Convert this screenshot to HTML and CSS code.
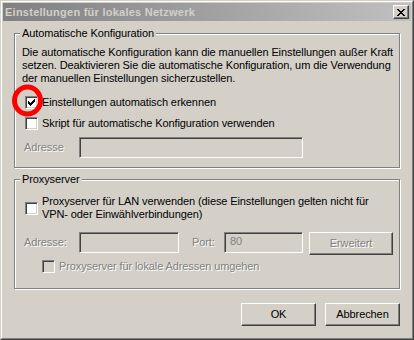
FILE: index.html
```html
<!DOCTYPE html>
<html lang="de">
<head>
    <meta charset="UTF-8">
    <meta name="viewport" content="width=device-width, initial-scale=1.0">
    <title>Einstellungen für lokales Netzwerk</title>
    <link rel="stylesheet" href="styles.css">
</head>
<body>
    <div class="window">
        <div class="frame">
            <div class="titlebar">
                <span class="title">Einstellungen für lokales Netzwerk</span>
                <span class="close-btn">
                    <svg width="8" height="7" viewBox="0 0 8 7" shape-rendering="crispEdges">
                        <path d="M0 0h2v1H0zM6 0h2v1H6zM1 1h2v1H1zM5 1h2v1H5zM2 2h4v1H2zM3 3h2v1H3zM2 4h4v1H2zM1 5h2v1H1zM5 5h2v1H5zM0 6h2v1H0zM6 6h2v1H6z" fill="#000"/>
                    </svg>
                </span>
            </div>

            <div class="dialog-body">
                <fieldset class="group group-auto">
                    <legend>Automatische Konfiguration</legend>
                    <p class="desc">Die automatische Konfiguration kann die manuellen Einstellungen außer Kraft<br>setzen. Deaktivieren Sie die automatische Konfiguration, um die Verwendung<br>der manuellen Einstellungen sicherzustellen.</p>
                    <label class="check row-detect">
                        <span class="box">
                            <svg width="7" height="7" viewBox="0 0 7 7" shape-rendering="crispEdges">
                                <path d="M6 0h1v1H6zM5 1h2v1H5zM0 2h1v1H0zM4 2h3v1H4zM0 3h2v1H0zM3 3h3v1H3zM0 4h5v1H0zM1 5h3v1H1zM2 6h1v1H2z" fill="#000"/>
                            </svg>
                        </span>
                        <span>Einstellungen automatisch erkennen</span>
                    </label>
                    <label class="check row-script">
                        <span class="box"></span>
                        <span>Skript für automatische Konfiguration verwenden</span>
                    </label>
                    <div class="field-row row-script-addr">
                        <span class="field-label disabled">Adresse</span>
                        <span class="edit edit-script"></span>
                    </div>
                </fieldset>

                <fieldset class="group group-proxy">
                    <legend>Proxyserver</legend>
                    <label class="check check-multi">
                        <span class="box"></span>
                        <span>Proxyserver für LAN verwenden (diese Einstellungen gelten nicht für<br>VPN- oder Einwählverbindungen)</span>
                    </label>
                    <div class="field-row row-proxy-addr">
                        <span class="field-label disabled">Adresse:</span>
                        <span class="edit edit-addr"></span>
                        <span class="port-label disabled">Port:</span>
                        <span class="edit edit-port">80</span>
                        <button class="btn btn-advanced disabled" type="button">Erweitert</button>
                    </div>
                    <label class="check check-bypass">
                        <span class="box box-disabled"></span>
                        <span class="disabled">Proxyserver für lokale Adressen umgehen</span>
                    </label>
                </fieldset>

                <div class="actions">
                    <button class="btn" type="button">OK</button>
                    <button class="btn" type="button">Abbrechen</button>
                </div>
            </div>
        </div>

        <!-- Markierung um das erste Kontrollkästchen -->
        <svg class="highlight" width="34" height="36" viewBox="0 0 34 36">
            <ellipse cx="16.5" cy="17.5" rx="13" ry="13.5" fill="none" stroke="#ff0000" stroke-width="5"/>
        </svg>
    </div>
</body>
</html>
```

FILE: styles.css
```css
body {
    margin: 0;
    background: #d4d0c8;
    font-family: "Liberation Sans", Arial, sans-serif;
    font-size: 11px;
    line-height: 13px;
    letter-spacing: -0.1px;
    color: #000;
}
.window {
    position: relative;
    width: 414px;
    height: 340px;
    box-sizing: border-box;
    border: 1px solid;
    border-color: #d4d0c8 #404040 #404040 #d4d0c8;
    background: #d4d0c8;
}
.frame {
    height: 100%;
    box-sizing: border-box;
    border: 1px solid;
    border-color: #fff #808080 #808080 #fff;
    padding: 1px;
}
.titlebar {
    height: 18px;
    display: flex;
    align-items: center;
    justify-content: space-between;
    padding: 0 2px 0 2px;
    background: linear-gradient(to right, #808080, #c0c0c0);
}
.title {
    color: #d4d0c8;
    font-weight: bold;
    letter-spacing: 0.25px;
}
.close-btn {
    width: 16px;
    height: 14px;
    box-sizing: border-box;
    display: flex;
    align-items: center;
    justify-content: center;
    background: #d4d0c8;
    border: 1px solid;
    border-color: #fff #404040 #404040 #fff;
    box-shadow: inset -1px -1px 0 #808080;
}
.dialog-body {
    padding: 0 0 0 11px;
}

/* Gruppenrahmen */
.group {
    width: 386px;
    box-sizing: border-box;
    margin: 0;
    padding: 0 0 0 7px;
    border: 1px solid #808080;
    box-shadow: 1px 1px 0 #fff, inset 1px 1px 0 #fff;
    min-inline-size: 0;
}
.group legend {
    padding: 0 2px;
    margin-left: -2px;
    background: #d4d0c8;
}
.group-auto {
    margin-top: 6px;
    padding-top: 6px;
    padding-bottom: 9px;
}
.group-proxy {
    margin-top: 5px;
    padding-top: 9px;
    padding-bottom: 15px;
}
.desc {
    margin: 0;
    white-space: nowrap;
}

/* Kontrollkästchen */
.check {
    display: flex;
    align-items: center;
    margin-left: 3px;
    white-space: nowrap;
}
.box {
    width: 13px;
    height: 13px;
    box-sizing: border-box;
    flex: none;
    display: flex;
    align-items: center;
    justify-content: center;
    margin-right: 4px;
    background: #fff;
    border: 1px solid;
    border-color: #808080 #fff #fff #808080;
    box-shadow: inset 1px 1px 0 #404040, inset -1px -1px 0 #d4d0c8;
}
.box-disabled {
    background: #d4d0c8;
}
.row-detect {
    margin-top: 11px;
}
.row-script {
    margin-top: 8px;
}
.check-bypass {
    margin-top: 5px;
    margin-left: 20px;
}

/* Eingabezeilen */
.field-row {
    display: flex;
    align-items: flex-start;
}
.row-script-addr {
    margin-top: 7px;
}
.row-proxy-addr {
    margin-top: 11px;
}
.field-label {
    width: 57px;
    box-sizing: border-box;
    padding-left: 2px;
    line-height: 21px;
}
.port-label {
    width: 45px;
    box-sizing: border-box;
    padding-left: 13px;
    line-height: 21px;
}
.disabled {
    color: #808080;
    text-shadow: 1px 1px 0 #fff;
}
.edit {
    height: 21px;
    box-sizing: border-box;
    padding-left: 5px;
    line-height: 17px;
    color: #808080;
    background: #d4d0c8;
    border: 1px solid;
    border-color: #808080 #fff #fff #808080;
    box-shadow: inset 1px 1px 0 #404040, inset -1px -1px 0 #d4d0c8;
}
.edit-script {
    width: 224px;
}
.edit-addr {
    width: 100px;
}
.edit-port {
    width: 79px;
}

/* Schaltflächen */
.btn {
    width: 75px;
    height: 23px;
    box-sizing: border-box;
    padding: 0;
    font: inherit;
    letter-spacing: inherit;
    color: #000;
    background: #d4d0c8;
    border: 1px solid;
    border-color: #fff #404040 #404040 #fff;
    box-shadow: inset -1px -1px 0 #808080;
    border-radius: 0;
}
.btn.disabled {
    color: #808080;
}
.btn-advanced {
    width: 84px;
    margin-left: 6px;
}
.actions {
    width: 386px;
    display: flex;
    justify-content: flex-end;
    gap: 9px;
    margin-top: 14px;
}

.highlight {
    position: absolute;
    left: 10px;
    top: 82px;
}
```
